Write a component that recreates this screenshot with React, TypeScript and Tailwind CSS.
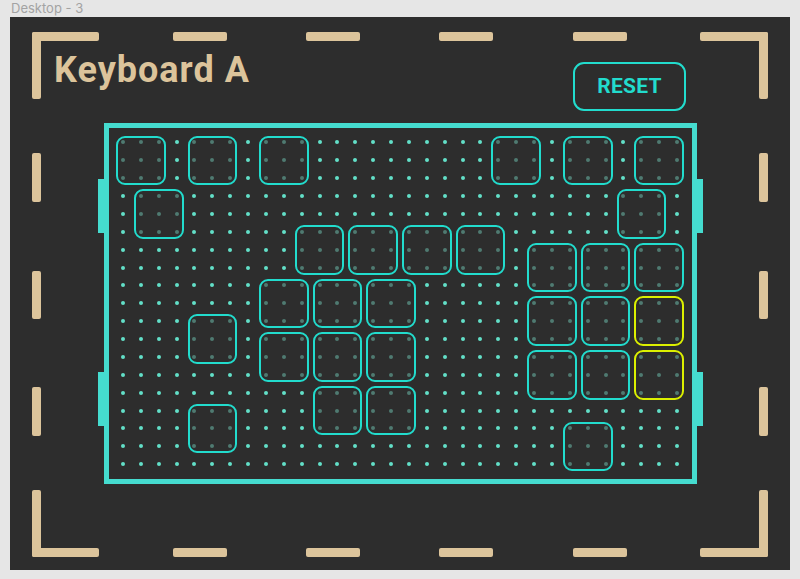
import React from "react";

const COLS = 32;
const ROWS = 19;

type Key = { c: number; r: number; hot?: boolean };

// top-left cell of each 3x3 key
const keys: Key[] = [
  { c: 0, r: 0 },
  { c: 4, r: 0 },
  { c: 8, r: 0 },
  { c: 21, r: 0 },
  { c: 25, r: 0 },
  { c: 29, r: 0 },
  { c: 1, r: 3 },
  { c: 28, r: 3 },
  { c: 10, r: 5 },
  { c: 13, r: 5 },
  { c: 16, r: 5 },
  { c: 19, r: 5 },
  { c: 23, r: 6 },
  { c: 26, r: 6 },
  { c: 29, r: 6 },
  { c: 8, r: 8 },
  { c: 11, r: 8 },
  { c: 14, r: 8 },
  { c: 23, r: 9 },
  { c: 26, r: 9 },
  { c: 29, r: 9, hot: true },
  { c: 4, r: 10 },
  { c: 8, r: 11 },
  { c: 11, r: 11 },
  { c: 14, r: 11 },
  { c: 23, r: 12 },
  { c: 26, r: 12 },
  { c: 29, r: 12, hot: true },
  { c: 11, r: 14 },
  { c: 14, r: 14 },
  { c: 4, r: 15 },
  { c: 25, r: 16 },
];

const covered = (c: number, r: number) =>
  keys.some((k) => c >= k.c && c < k.c + 3 && r >= k.r && r < k.r + 3);

function Bar({ className }: { className: string }) {
  return <div className={`shrink-0 rounded-[2px] bg-[#dcc49b] ${className}`} />;
}

function Board() {
  const dots = [];
  for (let r = 0; r < ROWS; r++) {
    for (let c = 0; c < COLS; c++) {
      dots.push(
        <div key={`${r}-${c}`} className="flex items-center justify-center">
          <div
            className={`h-[4px] w-[4px] rounded-full ${
              covered(c, r) ? "bg-[#4f7a71]" : "bg-[#62dfc8]"
            }`}
          />
        </div>
      );
    }
  }

  return (
    <div className="relative mx-auto w-[593px] border-[5px] border-[#45dccf] p-[5.5px]">
      {/* side tabs */}
      <div className="absolute -left-[11px] top-[51px] h-[54px] w-[6px] bg-[#45dccf]" />
      <div className="absolute -left-[11px] top-[244px] h-[54px] w-[6px] bg-[#45dccf]" />
      <div className="absolute -right-[11px] top-[51px] h-[54px] w-[6px] bg-[#45dccf]" />
      <div className="absolute -right-[11px] top-[244px] h-[54px] w-[6px] bg-[#45dccf]" />

      <div className="relative">
        <div className="grid grid-cols-[repeat(32,17.875px)] grid-rows-[repeat(19,17.875px)]">
          {dots}
        </div>
        <div className="absolute inset-0 grid grid-cols-[repeat(32,17.875px)] grid-rows-[repeat(19,17.875px)]">
          {keys.map((k) => (
            <div
              key={`${k.c}-${k.r}`}
              className={`m-[2px] rounded-[9px] border-2 ${
                k.hot ? "border-[#dcf000]" : "border-[#22dccd]"
              }`}
              style={{
                gridColumn: `${k.c + 1} / span 3`,
                gridRow: `${k.r + 1} / span 3`,
              }}
            />
          ))}
        </div>
      </div>
    </div>
  );
}

export default function App() {
  return (
    <div className="h-[579px] w-[800px] bg-[#e6e6e6] font-['Roboto',sans-serif]">
      <div className="h-[17px] pl-[11px] font-['Inter',sans-serif] text-[13px] leading-[17px] text-[#a3a3a3]">
        Desktop - 3
      </div>

      <div className="mx-[10px] h-[553px] bg-[#2d2d2d] px-[22px] pb-[13px] pt-[15px]">
        <div className="grid h-full grid-cols-[9px_1fr_9px] grid-rows-[9px_1fr_9px]">
          {/* dashed frame */}
          <div className="col-span-3 col-start-1 row-start-1 flex">
            <Bar className="h-[9px] w-[67px]" />
            <Bar className="ml-[74px] h-[9px] w-[54px]" />
            <Bar className="ml-[79px] h-[9px] w-[54px]" />
            <Bar className="ml-[79px] h-[9px] w-[54px]" />
            <Bar className="ml-[80px] h-[9px] w-[54px]" />
            <Bar className="ml-[73px] h-[9px] w-[68px]" />
          </div>
          <div className="col-span-3 col-start-1 row-start-3 flex">
            <Bar className="h-[9px] w-[67px]" />
            <Bar className="ml-[74px] h-[9px] w-[54px]" />
            <Bar className="ml-[79px] h-[9px] w-[54px]" />
            <Bar className="ml-[79px] h-[9px] w-[54px]" />
            <Bar className="ml-[80px] h-[9px] w-[54px]" />
            <Bar className="ml-[73px] h-[9px] w-[68px]" />
          </div>
          <div className="col-start-1 row-span-3 row-start-1 flex flex-col">
            <Bar className="h-[67px] w-[9px]" />
            <Bar className="mt-[54px] h-[49px] w-[9px]" />
            <Bar className="mt-[69px] h-[48px] w-[9px]" />
            <Bar className="mt-[68px] h-[49px] w-[9px]" />
            <Bar className="mt-[54px] h-[67px] w-[9px]" />
          </div>
          <div className="col-start-3 row-span-3 row-start-1 flex flex-col">
            <Bar className="h-[67px] w-[9px]" />
            <Bar className="mt-[54px] h-[49px] w-[9px]" />
            <Bar className="mt-[69px] h-[48px] w-[9px]" />
            <Bar className="mt-[68px] h-[49px] w-[9px]" />
            <Bar className="mt-[54px] h-[67px] w-[9px]" />
          </div>

          {/* content */}
          <div className="col-start-2 row-start-2 flex flex-col">
            <div className="flex items-start justify-between">
              <h1 className="ml-[13px] mt-[11px] text-[36px] font-bold leading-[36px] tracking-[1px] text-[#dcc49b]">
                Keyboard A
              </h1>
              <button className="mr-[73px] mt-[21px] flex h-[49px] w-[113px] items-center justify-center rounded-[11px] border-2 border-[#22dccd] text-[21px] font-bold tracking-[0.3px] text-[#22dccd]">
                RESET
              </button>
            </div>
            <div className="mt-[12px]">
              <Board />
            </div>
          </div>
        </div>
      </div>
    </div>
  );
}
